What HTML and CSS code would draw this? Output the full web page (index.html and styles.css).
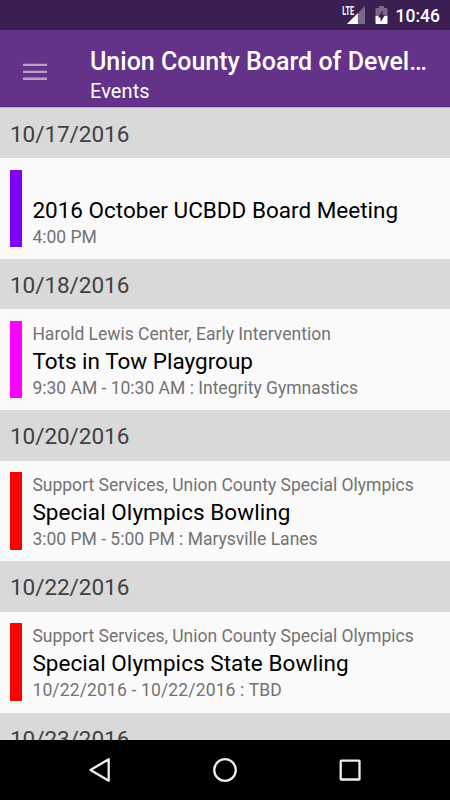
FILE: index.html
```
<!DOCTYPE html>
<html lang="en">

<head>
<meta charset="UTF-8">
<title>Events</title>
<link rel="stylesheet" href="styles.css">
</head>

<body>
<div class="statusbar">
  <svg class="signal" width="24" height="20" viewBox="0 0 24 20">
    <path d="M23 0V18H5Z" fill="#7b6788"/>
    <path d="M15.8 7.2V18H5Z" fill="#fff"/>
    <rect width="13" height="9.5" fill="#3c1f52"/>
    <text class="lte" x="0.3" y="8.8" textLength="11.8" lengthAdjust="spacingAndGlyphs">LTE</text>
  </svg>
  <svg class="battery" width="13" height="19" viewBox="0 0 13 19">
    <path d="M4 0H9V2H11.5Q12.5 2 12.5 3V10H.5V3Q.5 2 1.5 2H4Z" fill="#7b6788"/>
    <path d="M.5 10H12.5V17Q12.5 18 11.5 18H1.5Q.5 18 .5 17Z" fill="#fff"/>
    <path d="M7.5 4.5V9H10L5.5 16V11.5H3Z" fill="#3c1f52"/>
  </svg>
  <span class="clock">10:46</span>
</div>

<div class="toolbar">
  <svg class="menu" width="24" height="18" viewBox="0 0 24 18">
    <path d="M0 1.9H24M0 8.9H24M0 15.7H24" stroke="#b99fc9" stroke-width="2.4"/>
  </svg>
  <div class="titles">
    <div class="title">Union County Board of Devel…</div>
    <div class="subtitle">Events</div>
  </div>
</div>

<div class="list">
  <div class="day">10/17/2016</div>
  <div class="event">
    <div class="bar violet"></div>
    <div class="info">
      <div class="small"></div>
      <div class="name">2016 October UCBDD Board Meeting</div>
      <div class="small">4:00 PM</div>
    </div>
  </div>

  <div class="day">10/18/2016</div>
  <div class="event">
    <div class="bar magenta"></div>
    <div class="info">
      <div class="small">Harold Lewis Center, Early Intervention</div>
      <div class="name">Tots in Tow Playgroup</div>
      <div class="small">9:30 AM - 10:30 AM : Integrity Gymnastics</div>
    </div>
  </div>

  <div class="day">10/20/2016</div>
  <div class="event">
    <div class="bar red"></div>
    <div class="info">
      <div class="small">Support Services, Union County Special Olympics</div>
      <div class="name wide">Special Olympics Bowling</div>
      <div class="small">3:00 PM - 5:00 PM : Marysville Lanes</div>
    </div>
  </div>

  <div class="day">10/22/2016</div>
  <div class="event">
    <div class="bar red"></div>
    <div class="info">
      <div class="small">Support Services, Union County Special Olympics</div>
      <div class="name wide">Special Olympics State Bowling</div>
      <div class="small range">10/22/2016 - 10/22/2016 : TBD</div>
    </div>
  </div>

  <div class="day">10/23/2016</div>
</div>

<div class="navbar">
  <svg width="26" height="26" viewBox="0 0 26 26"><path d="M21.7 2.2V23.8L3.5 13Z"/></svg>
  <svg width="26" height="26" viewBox="0 0 26 26"><circle cx="13" cy="13" r="10.8"/></svg>
  <svg width="26" height="26" viewBox="0 0 26 26"><rect x="3.7" y="3.7" width="18.8" height="18.8" rx="0.6"/></svg>
</div>
</body>

</html>
```
FILE: styles.css
```
html, body{
  margin:0;
  padding:0;
}

body{
  display:flex;
  flex-direction:column;
  width:450px;
  height:800px;
  overflow:hidden;
  background:#fafafa;
  font-family:Roboto, sans-serif;
}

.statusbar{
  display:flex;
  justify-content:flex-end;
  box-sizing:border-box;
  height:30px;
  padding-right:10px;
  background:#3c1f52;
  color:#fff;
}

.signal{
  margin-top:6px;
  overflow:visible;
}

.lte{
  font-size:12px;
  font-weight:bold;
  fill:#fff;
}

.battery{
  margin:6px 8px 0 9px;
}

.clock{
  font-size:17.5px;
  font-weight:500;
  line-height:32px;
}

.toolbar{
  position:relative;
  display:flex;
  box-sizing:border-box;
  flex:none;
  height:77px;
  margin-bottom:0.7px;
  padding-left:23px;
  background:#643389;
  border-bottom:1px solid #592680;
  box-shadow:0 1px #bfb0ca;
  color:#fff;
}

.menu{
  margin:33px 43px 0 0;
}

.titles{
  padding-top:17px;
  white-space:nowrap;
}

.title{
  font-size:25px;
  font-weight:500;
  line-height:30px;
}

.subtitle{
  font-size:20px;
  line-height:28px;
  letter-spacing:0.1px;
}

.list{
  flex:1;
  min-height:0;
  overflow:hidden;
}

.day{
  box-sizing:border-box;
  height:50.5px;
  padding-left:10px;
  background:#d9d9d9;
  color:#404040;
  font-size:22.5px;
  line-height:52px;
  letter-spacing:-0.05px;
}

.event{
  display:flex;
  box-sizing:border-box;
  height:100.75px;
  padding:11.5px 10px;
}

.bar{
  width:12.4px;
  height:77.5px;
  margin-right:10px;
}

.violet{
  background:#7f00ff;
}

.magenta{
  background:#f0f;
}

.red{
  background:#f00;
}

.info{
  white-space:nowrap;
}

.small{
  height:25px;
  color:#737373;
  font-size:17.5px;
  line-height:26px;
}

.name{
  height:29px;
  color:#000;
  font-size:22.5px;
  line-height:31px;
}

.wide{
  letter-spacing:0.06px;
}

.range{
  letter-spacing:0.15px;
}

.navbar{
  display:flex;
  justify-content:center;
  align-items:center;
  gap:99px;
  height:60px;
  background:#000;
}

.navbar svg{
  fill:none;
  stroke:#eee;
  stroke-width:2.3;
  stroke-linejoin:round;
}
```
